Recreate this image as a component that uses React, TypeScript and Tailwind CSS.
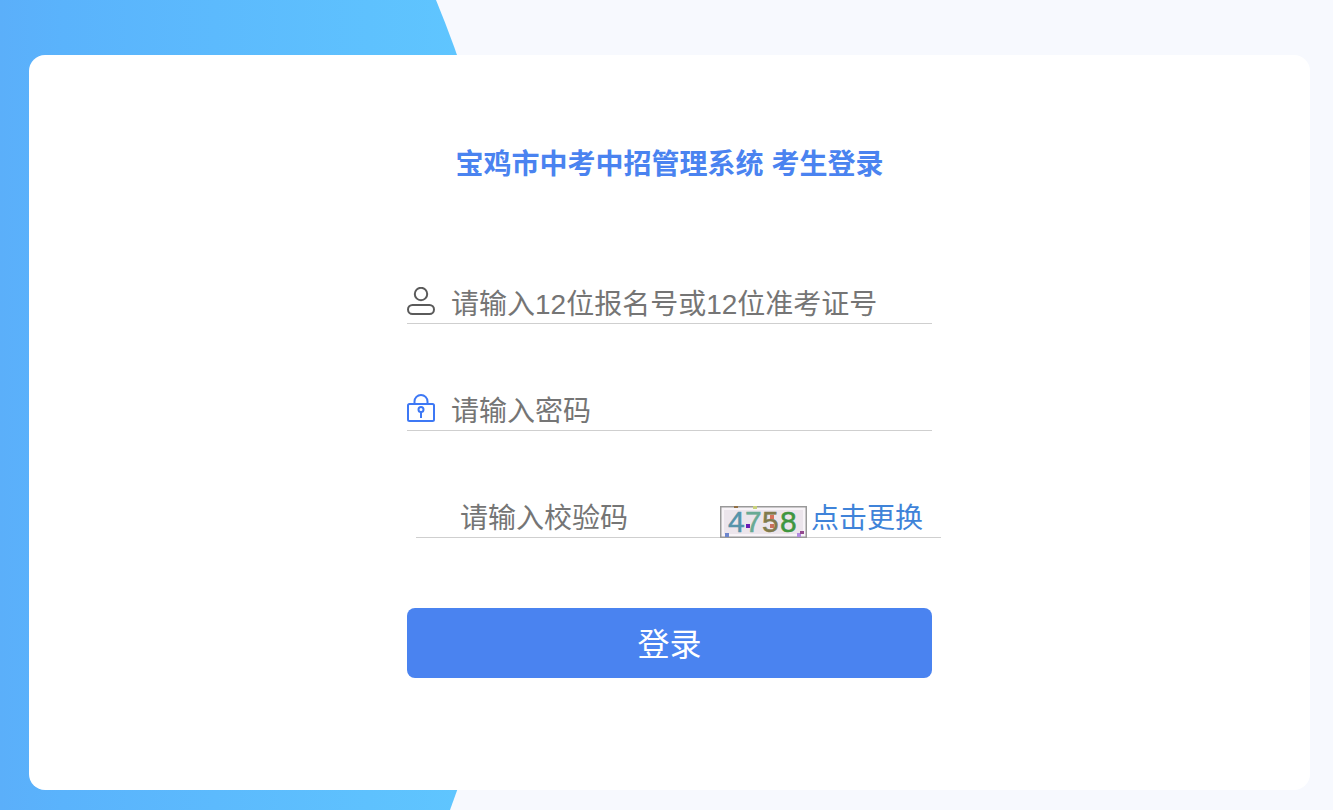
import { useState, type FormEvent, type ReactNode } from 'react'
import { clsx } from 'clsx'

const INPUT_CLASS =
  'min-w-0 flex-1 bg-transparent text-[28px] leading-9 text-gray-800 outline-none placeholder:text-[#757575]'

function Backdrop() {
  return (
    <svg
      aria-hidden="true"
      className="absolute inset-0 h-full w-full"
      viewBox="0 0 1333 810"
      preserveAspectRatio="none"
    >
      <defs>
        <linearGradient id="backdrop" x1="0" y1="0" x2="1" y2="0">
          <stop offset="0" stopColor="#5baffa" />
          <stop offset="0.12" stopColor="#5ab3fc" />
          <stop offset="1" stopColor="#60c8ff" />
        </linearGradient>
      </defs>
      <path d="M0 0H436A1107 1107 0 0 1 450 810H0Z" fill="url(#backdrop)" />
    </svg>
  )
}

function UserIcon() {
  return (
    <svg width="28" height="28" viewBox="0 0 28 28" fill="none" stroke="#5a5a5a" strokeWidth="2">
      <circle cx="14" cy="7" r="6.2" />
      <rect x="1" y="18" width="26" height="9" rx="4.5" />
    </svg>
  )
}

function LockIcon() {
  return (
    <svg width="28" height="28" viewBox="0 0 28 28" fill="none" stroke="#3d78f5" strokeWidth="2">
      <rect x="1" y="10" width="26" height="17" rx="1.5" />
      <path d="M7.5 10V7.5a6.5 6.5 0 0 1 13 0V10" />
      <circle cx="14" cy="15.5" r="2.5" />
      <path d="M14 18v6" />
    </svg>
  )
}

function Captcha() {
  return (
    <svg width="87" height="32" viewBox="0 0 87 32" role="img" aria-label="校验码">
      <rect x="0.75" y="0.75" width="85.5" height="30.5" fill="#f8f4f8" stroke="#999" strokeWidth="1.5" />
      <rect x="4" y="4" width="79" height="24" fill="#ece5ec" />
      <g fontFamily="'Liberation Sans', Arial, sans-serif" fontSize="30" strokeWidth="0.5">
        <text x="8" y="26" fill="#5593aa" stroke="#5593aa">4</text>
        <text x="25" y="26" fill="#69aa94" stroke="#69aa94">7</text>
        <text x="42" y="26" fill="#817a4b" stroke="#817a4b">5</text>
        <text x="60" y="26" fill="#3f963f" stroke="#3f963f">8</text>
      </g>
      <rect x="26" y="18" width="4" height="4" fill="#6a1bb5" />
      <rect x="50" y="9" width="4" height="4" fill="#d8725b" />
      <rect x="50" y="18" width="4" height="4" fill="#c8705b" />
      <rect x="14" y="0" width="4" height="2" fill="#927044" />
      <rect x="33" y="0" width="4" height="3" fill="#c9d27b" />
      <rect x="5" y="27" width="4" height="4" fill="#6d86cd" />
      <rect x="77" y="27" width="4" height="4" fill="#b18be0" />
      <rect x="80" y="25" width="4" height="3" fill="#93498f" />
    </svg>
  )
}

function Field({ children, className }: { children: ReactNode; className?: string }) {
  return (
    <div className={clsx('flex h-11 items-end border-b border-[#cfcfcf]', className)}>
      {children}
    </div>
  )
}

export default function App() {
  const [account, setAccount] = useState('')
  const [password, setPassword] = useState('')
  const [code, setCode] = useState('')

  const handleSubmit = (e: FormEvent) => {
    e.preventDefault()
  }

  return (
    <div className="relative flex min-h-screen bg-[#f7f9fe] pt-[55px] pr-[23px] pb-5 pl-[29px] font-['Liberation_Sans','Noto_Sans_CJK_SC',sans-serif]">
      <Backdrop />

      <main className="relative flex flex-1 flex-col items-center rounded-2xl bg-white px-6 pt-[90px] pb-10">
        <h1 className="text-[28px] leading-10 font-bold text-[#4a83f0]">
          宝鸡市中考中招管理系统 考生登录
        </h1>

        <form onSubmit={handleSubmit} className="mt-[95px] flex w-full max-w-[525px] flex-col gap-[63px]">
          <Field>
            <label htmlFor="account" aria-label="报名号或准考证号" className="mr-4 mb-2">
              <UserIcon />
            </label>
            <input
              id="account"
              type="text"
              value={account}
              onChange={(e) => setAccount(e.target.value)}
              placeholder="请输入12位报名号或12位准考证号"
              className={INPUT_CLASS}
            />
          </Field>

          <Field>
            <label htmlFor="password" aria-label="密码" className="mr-4 mb-2">
              <LockIcon />
            </label>
            <input
              id="password"
              type="password"
              value={password}
              onChange={(e) => setPassword(e.target.value)}
              placeholder="请输入密码"
              className={INPUT_CLASS}
            />
          </Field>

          <Field className="-mr-[9px] ml-[9px] pr-[18px] pl-11">
            <input
              id="code"
              type="text"
              aria-label="校验码"
              value={code}
              onChange={(e) => setCode(e.target.value)}
              placeholder="请输入校验码"
              className={INPUT_CLASS}
            />
            <span className="-mb-px">
              <Captcha />
            </span>
            <a href="#" className="ml-1 text-[28px] leading-9 text-[#3f83d9]">
              点击更换
            </a>
          </Field>

          <button
            type="submit"
            className="mt-[7px] h-[70px] rounded-lg bg-[#4a83f0] pt-1 text-[32px] text-white"
          >
            登录
          </button>
        </form>
      </main>
    </div>
  )
}
